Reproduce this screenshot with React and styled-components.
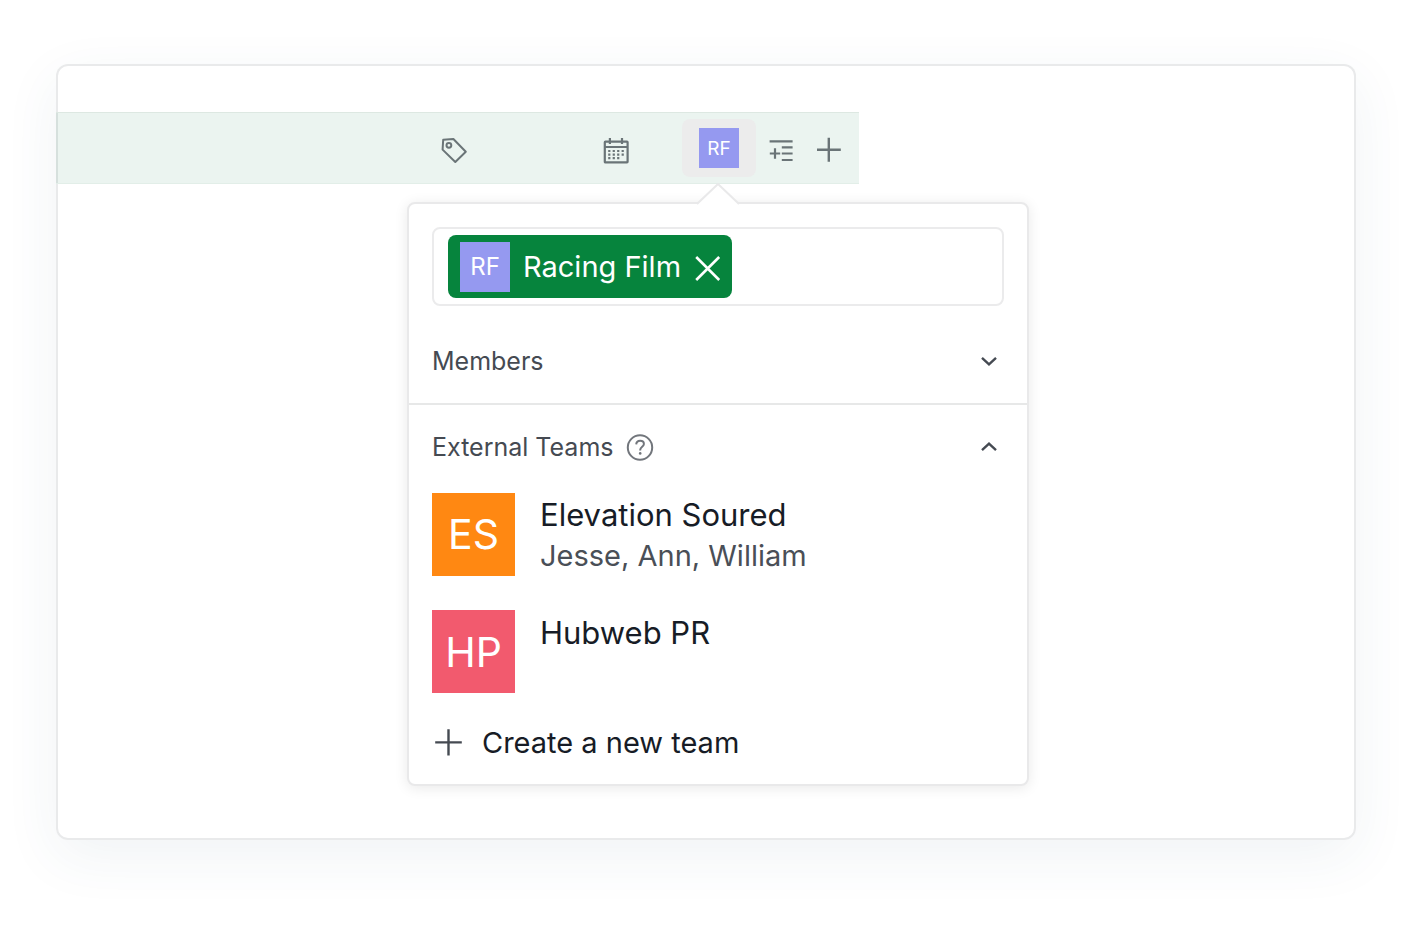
import React, { useState } from "react";
import styled, { createGlobalStyle } from "styled-components";

const GlobalStyle = createGlobalStyle`
  * {
    box-sizing: border-box;
  }

  body {
    margin: 0;
    background-color: #ffffff;
    font-family: Inter, "Liberation Sans", sans-serif;
    color: #171c26;
  }

  button {
    display: flex;
    align-items: center;
    padding: 0;
    border: none;
    background: none;
    color: inherit;
    font: inherit;
    cursor: pointer;
  }

  svg {
    display: block;
    fill: none;
    stroke: currentColor;
  }
`;

const Page = styled.main`
  padding: 64px 56px 92px;
`;

const Card = styled.section`
  padding: 48px 0 54px;
  border-radius: 12px;
  background-color: #ffffff;
  box-shadow: inset 0 0 0 2px #e9eaeb, 0 16px 56px rgba(40, 80, 110, 0.07);
`;

const TaskRow = styled.div`
  display: grid;
  grid-template-columns: 162px 80px 87px 48px 42px;
  justify-content: end;
  align-items: center;
  width: 803px;
  max-width: 100%;
  height: 72px;
  border-top: 1px solid #dde8e2;
  border-bottom: 1px solid #e2eee8;
  background-color: rgba(4, 116, 62, 0.08);
  color: #6a7477;
`;

const IconButton = styled.button`
  justify-self: start;
`;

const AssigneeButton = styled.button`
  justify-content: center;
  justify-self: start;
  width: 74px;
  height: 58px;
  border-radius: 8px;
  background-color: #ececec;
`;

const Avatar = styled.span`
  display: flex;
  flex: none;
  align-items: center;
  justify-content: center;
  width: ${(props) => props.$size}px;
  height: ${(props) => props.$size}px;
  background-color: ${(props) => props.$color};
  color: #ffffff;
  font-size: ${(props) => props.$font}px;
  font-weight: 400;
`;

const Popover = styled.div`
  position: relative;
  width: 622px;
  max-width: calc(100% - 351px);
  margin: 18px 0 0 351px;
  padding: 23px 0 18px;
  border: 2px solid #e9e9ea;
  border-radius: 8px;
  background-color: #ffffff;
  box-shadow: 0 2px 14px rgba(0, 0, 0, 0.09);
`;

const Arrow = styled.svg`
  position: absolute;
  bottom: 100%;
  left: 50%;
  margin: 0 0 -1px -21px;
`;

const Field = styled.div`
  display: flex;
  margin: 0 23px 13px;
  padding: 6px 14px;
  border: 2px solid #ebebec;
  border-radius: 8px;

  input {
    flex: 1;
    min-width: 0;
    border: none;
    outline: none;
    background: none;
    font: inherit;
    font-size: 29px;
  }
`;

const Chip = styled.span`
  display: flex;
  align-items: center;
  gap: 13px;
  height: 63px;
  padding: 0 10px 0 12px;
  border-radius: 8px;
  background-color: #06843d;
  color: #ffffff;
  font-size: 29px;
`;

const SectionHeader = styled.div`
  display: flex;
  align-items: center;
  height: 84px;
  padding: 0 23px;
  color: #454a52;
  font-size: 25px;
`;

const HelpButton = styled.button`
  margin-left: 12px;
  color: #72767c;
`;

const Toggle = styled.button`
  margin-left: auto;

  svg {
    transform: ${(props) => (props.$open ? "rotate(180deg)" : "none")};
  }
`;

const Divider = styled.hr`
  height: 2px;
  margin: 0;
  border: none;
  background-color: #e7e8e8;
`;

const TeamList = styled.ul`
  display: flex;
  flex-direction: column;
  gap: 34px;
  margin: 0;
  padding: 3px 23px 25px;
  list-style: none;
`;

const TeamButton = styled.button`
  gap: 25px;
  width: 100%;
  text-align: left;
`;

const TeamText = styled.span`
  display: flex;
  flex-direction: column;
  align-self: flex-start;
  padding-top: 2px;
  line-height: 41px;
`;

const TeamName = styled.span`
  font-size: 31px;
`;

const TeamMembers = styled.span`
  color: #4a4f57;
  font-size: 29px;
`;

const CreateButton = styled.button`
  gap: 20px;
  height: 48px;
  margin: 0 25px;
  font-size: 29px;

  svg {
    color: #454a52;
  }
`;

const TagIcon = () => (
  <svg width="28" height="34" viewBox="0 -6 28 34" strokeWidth="2" strokeLinejoin="round">
    <path d="M3.2 2.8 13.4 2 25.8 14.8 15.3 25 2.6 12.6Z" />
    <circle cx="8.9" cy="8.3" r="2.4" />
  </svg>
);

const CalendarIcon = () => (
  <svg width="28" height="34" viewBox="0 -6 28 34" strokeWidth="2.2">
    <rect x="2.8" y="4.7" width="22.8" height="20.6" rx="0.6" />
    <path d="M3 10h23M7.9 1v6M20 1v6" />
    <path
      d="M6.2 14h15.6M6.2 17.6h15.6M6.2 21.2h11.3"
      strokeDasharray="2.2 2.27"
    />
  </svg>
);

const SubtaskIcon = () => (
  <svg width="28" height="34" viewBox="0 -6 28 34" strokeWidth="2.2">
    <path d="M.6 4.4h23M12.8 10.4h10.8M12.8 16.5h10.8M12.8 23h10.8M.8 16.5h10.4M6 11.2v10.6" />
  </svg>
);

const AddIcon = () => (
  <svg width="28" height="34" viewBox="0 -6 28 34" strokeWidth="2.4">
    <path d="M0 12.7h23.8M11.8 0.7v24" />
  </svg>
);

const ChevronIcon = () => (
  <svg width="30" height="30" viewBox="0 0 30 30" strokeWidth="2.4">
    <path d="M8 11.8 15 18.4 22 11.8" />
  </svg>
);

const HelpIcon = () => (
  <svg width="28" height="28" viewBox="0 0 28 28" strokeWidth="2">
    <circle cx="14" cy="14.5" r="12.2" />
    <path d="M10.2 11.4c.2-2.3 1.7-3.6 3.9-3.6s3.8 1.3 3.8 3.2c0 2.7-3.7 2.9-3.7 6v.5" />
    <circle cx="14.2" cy="20.4" r="1.3" fill="currentColor" stroke="none" />
  </svg>
);

const CloseIcon = () => (
  <svg width="28" height="28" viewBox="0 0 28 28" strokeWidth="2.6">
    <path d="M2.2 4 25.2 27M25.2 4 2.2 27" />
  </svg>
);

const PlusIcon = () => (
  <svg width="28" height="28" viewBox="0 0 28 28" strokeWidth="2.4">
    <path d="M1.2 14.4h26.6M14.5 1.2v26.4" />
  </svg>
);

const teams = [
  {
    initials: "ES",
    name: "Elevation Soured",
    members: "Jesse, Ann, William",
    color: "#ff8812",
  },
  { initials: "HP", name: "Hubweb PR", color: "#f25a6e" },
];

const Section = ({ title, help, open, onToggle }) => (
  <SectionHeader>
    <span>{title}</span>
    {help && (
      <HelpButton aria-label="About external teams">
        <HelpIcon />
      </HelpButton>
    )}
    <Toggle $open={open} aria-label={title} aria-expanded={open} onClick={onToggle}>
      <ChevronIcon />
    </Toggle>
  </SectionHeader>
);

const App = () => {
  const [membersOpen, setMembersOpen] = useState(false);
  const [teamsOpen, setTeamsOpen] = useState(true);
  const [selected, setSelected] = useState(true);

  return (
    <>
      <GlobalStyle />
      <Page>
        <Card>
          <TaskRow>
            <IconButton aria-label="Tags">
              <TagIcon />
            </IconButton>
            <IconButton aria-label="Due date">
              <CalendarIcon />
            </IconButton>
            <AssigneeButton aria-label="Assignee">
              <Avatar $size={40} $font={19} $color="#9599f0">
                RF
              </Avatar>
            </AssigneeButton>
            <IconButton aria-label="Add subtask">
              <SubtaskIcon />
            </IconButton>
            <IconButton aria-label="Add">
              <AddIcon />
            </IconButton>
          </TaskRow>

          <Popover>
            <Arrow width="42" height="22" viewBox="0 0 42 22" strokeWidth="2">
              <path d="M0 21 21 1 42 21V22H0Z" fill="#ffffff" stroke="none" />
              <path d="M0 21 21 1 42 21" stroke="#e9e9ea" />
            </Arrow>
            <Field>
              {selected && (
                <Chip>
                  <Avatar $size={50} $font={24} $color="#9599f0">
                    RF
                  </Avatar>
                  Racing Film
                  <button aria-label="Remove Racing Film" onClick={() => setSelected(false)}>
                    <CloseIcon />
                  </button>
                </Chip>
              )}
              <input type="text" aria-label="Search people and teams" />
            </Field>

            <Section
              title="Members"
              open={membersOpen}
              onToggle={() => setMembersOpen(!membersOpen)}
            />
            <Divider />
            <Section
              title="External Teams"
              help
              open={teamsOpen}
              onToggle={() => setTeamsOpen(!teamsOpen)}
            />
            {teamsOpen && (
              <TeamList>
                {teams.map((team) => (
                  <li key={team.initials}>
                    <TeamButton>
                      <Avatar $size={83} $font={41} $color={team.color}>
                        {team.initials}
                      </Avatar>
                      <TeamText>
                        <TeamName>{team.name}</TeamName>
                        {team.members && <TeamMembers>{team.members}</TeamMembers>}
                      </TeamText>
                    </TeamButton>
                  </li>
                ))}
              </TeamList>
            )}
            <CreateButton>
              <PlusIcon />
              Create a new team
            </CreateButton>
          </Popover>
        </Card>
      </Page>
    </>
  );
};

export default App;
